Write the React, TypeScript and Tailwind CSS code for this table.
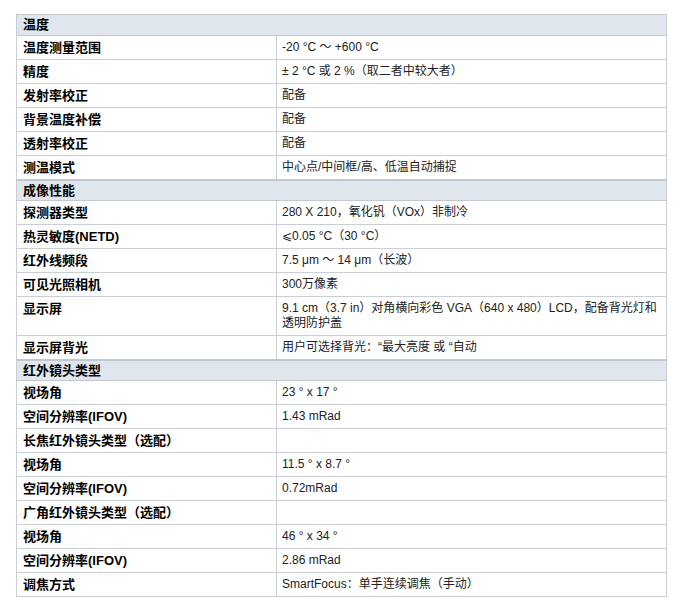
type Row =
  | { kind: 'section'; title: string }
  | { kind: 'row'; label: string; value?: React.ReactNode; tall?: boolean };

const rows: Row[] = [
  { kind: 'section', title: '温度' },
  { kind: 'row', label: '温度测量范围', value: '-20 °C ～ +600 °C' },
  { kind: 'row', label: '精度', value: '± 2 °C 或 2 %（取二者中较大者）' },
  { kind: 'row', label: '发射率校正', value: '配备' },
  { kind: 'row', label: '背景温度补偿', value: '配备' },
  { kind: 'row', label: '透射率校正', value: '配备' },
  { kind: 'row', label: '测温模式', value: '中心点/中间框/高、低温自动捕捉' },
  { kind: 'section', title: '成像性能' },
  { kind: 'row', label: '探测器类型', value: '280 X 210，氧化钒（VOx）非制冷' },
  { kind: 'row', label: '热灵敏度(NETD)', value: '⩽0.05 °C（30 °C）' },
  { kind: 'row', label: '红外线频段', value: '7.5 μm ～ 14 μm（长波）' },
  { kind: 'row', label: '可见光照相机', value: '300万像素' },
  {
    kind: 'row',
    label: '显示屏',
    value: '9.1 cm（3.7 in）对角横向彩色 VGA（640 x 480）LCD，配备背光灯和透明防护盖',
    tall: true,
  },
  { kind: 'row', label: '显示屏背光', value: '用户可选择背光：“最大亮度 或 “自动' },
  { kind: 'section', title: '红外镜头类型' },
  { kind: 'row', label: '视场角', value: '23 ° x 17 °' },
  { kind: 'row', label: '空间分辨率(IFOV)', value: '1.43 mRad' },
  { kind: 'row', label: '长焦红外镜头类型（选配）' },
  { kind: 'row', label: '视场角', value: '11.5 ° x 8.7 °' },
  { kind: 'row', label: '空间分辨率(IFOV)', value: '0.72mRad' },
  { kind: 'row', label: '广角红外镜头类型（选配）' },
  { kind: 'row', label: '视场角', value: '46 ° x 34 °' },
  { kind: 'row', label: '空间分辨率(IFOV)', value: '2.86 mRad' },
  { kind: 'row', label: '调焦方式', value: 'SmartFocus：单手连续调焦（手动）' },
];

const App = () => {
  return (
    <div className="min-h-[598px] bg-white pt-[14px] pl-[16px] font-['Liberation_Sans','Noto_Sans_CJK_SC',sans-serif]">
      <table className="w-[651px] border-collapse table-fixed border border-[#c9cfd5]">
        <colgroup>
          <col className="w-[260px]" />
          <col />
        </colgroup>
        <tbody>
          {rows.map((row, i) =>
            row.kind === 'section' ? (
              <tr key={i} className="h-[21px] bg-[#dfe6ed]">
                <td
                  colSpan={2}
                  className={`border-[#c2c8ce] border-b px-[6px] py-0 text-[13px] font-bold text-black ${
                    i === 0 ? 'border-t' : 'border-t-2'
                  }`}
                >
                  {row.title}
                </td>
              </tr>
            ) : (
              <tr key={i} className={row.tall ? 'h-[39px]' : 'h-[24px]'}>
                <td className="border border-[#c9cfd5] px-[6px] py-0 align-top pt-[4px] text-[13px] font-bold text-black leading-[16px]">
                  {row.label}
                </td>
                <td className="border border-[#c9cfd5] pl-[5px] pr-[6px] py-0 align-top pt-[4px] text-[12px] text-[#222] leading-[15px]">
                  {row.value}
                </td>
              </tr>
            )
          )}
        </tbody>
      </table>
    </div>
  );
};

export default App;
